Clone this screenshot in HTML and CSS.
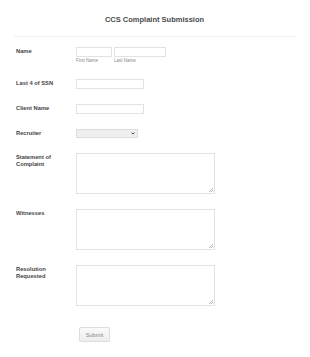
FILE: index.html
```html
<!DOCTYPE html>
<html lang="en">
<head>
  <title>CCS Complaint Submission</title>
  <meta charset="utf-8" />
  <meta name="viewport" content="width=device-width, initial-scale=1.0">
  <link rel="stylesheet" href="styles.css">
</head>
<body>

  <form class="form-all">

    <div class="form-header">
      <h1>CCS Complaint Submission</h1>
    </div>

    <div class="form-line">
      <label class="form-label">Name</label>
      <div class="form-input name-group">
        <span class="name-part">
          <input type="text" class="first-name" />
          <span class="sublabel">First Name</span>
        </span>
        <span class="name-part">
          <input type="text" class="last-name" />
          <span class="sublabel">Last Name</span>
        </span>
      </div>
    </div>

    <div class="form-line">
      <label class="form-label">Last 4 of SSN</label>
      <div class="form-input">
        <input type="text" class="textbox" />
      </div>
    </div>

    <div class="form-line">
      <label class="form-label">Client Name</label>
      <div class="form-input">
        <input type="text" class="textbox" />
      </div>
    </div>

    <div class="form-line">
      <label class="form-label">Recruiter</label>
      <div class="form-input">
        <div class="dropdown">
          <svg class="chevron" width="4" height="3" viewBox="0 0 4 3">
            <path d="M0.6 0.6 L2 2.1 L3.4 0.6" fill="none" stroke="#333" stroke-width="0.9" />
          </svg>
        </div>
      </div>
    </div>

    <div class="form-line">
      <label class="form-label">Statement of<br />Complaint</label>
      <div class="form-input">
        <textarea class="textarea"></textarea>
      </div>
    </div>

    <div class="form-line">
      <label class="form-label">Witnesses</label>
      <div class="form-input">
        <textarea class="textarea"></textarea>
      </div>
    </div>

    <div class="form-line">
      <label class="form-label">Resolution<br />Requested</label>
      <div class="form-input">
        <textarea class="textarea"></textarea>
      </div>
    </div>

    <div class="form-buttons">
      <button type="button" class="submit-button">Submit</button>
    </div>

  </form>

</body>
</html>
```

FILE: styles.css
```css
body {
  margin: 0;
  background: #fff;
  font-family: "Liberation Sans", Arial, sans-serif;
  color: #555;
}

.form-all {
  margin: 0 15px 0 14px;
}

.form-header {
  padding: 15px 0 12px;
  border-bottom: 1px solid #eee;
  margin-bottom: 10px;
}

.form-header h1 {
  margin: 0;
  font-size: 7.5px;
  line-height: 9px;
  font-weight: bold;
  text-align: center;
  color: #4a4a4a;
}

.form-line {
  display: flex;
  padding-left: 2px;
  margin-bottom: 15px;
}

.form-label {
  width: 60px;
  flex-shrink: 0;
  padding-top: 1px;
  font-size: 5.75px;
  line-height: 6.5px;
  font-weight: bold;
  color: #444;
}

.form-input {
  display: flex;
}

input,
textarea {
  box-sizing: border-box;
  margin: 0;
  border: 1px solid #e2e2e2;
  border-radius: 0;
  background: #fff;
  padding: 0;
  outline: none;
}

.name-group {
  gap: 2px;
}

.name-part {
  display: flex;
  flex-direction: column;
}

.first-name {
  width: 36px;
  height: 10px;
}

.last-name {
  width: 52px;
  height: 10px;
}

.sublabel {
  font-size: 4.5px;
  line-height: 7px;
  color: #888;
}

.textbox {
  width: 68px;
  height: 10px;
}

.dropdown {
  box-sizing: border-box;
  width: 62px;
  height: 9px;
  border: 1px solid #ddd;
  background: #efefef;
  position: relative;
}

.chevron {
  position: absolute;
  right: 2px;
  top: 2px;
}

/* small resize grip drawn in the corner */
.textarea {
  width: 139px;
  height: 41px;
  resize: none;
  background:
    linear-gradient(135deg, transparent 45%, #bbb 45%, #bbb 55%, transparent 55%, transparent 72%, #bbb 72%, #bbb 82%, transparent 82%) no-repeat right 1px bottom 1px / 4px 4px,
    #fff;
}

.form-buttons {
  padding: 6px 0 0 65px;
}

.submit-button {
  display: block;
  box-sizing: border-box;
  width: 31px;
  height: 15px;
  padding: 0;
  border: 1px solid #ddd;
  border-radius: 2px;
  background: linear-gradient(#fafafa, #eee);
  font-family: "Liberation Sans", Arial, sans-serif;
  font-size: 5.7px;
  color: #888;
  box-shadow: 0 1px 0 #e6e6e6;
}
```
